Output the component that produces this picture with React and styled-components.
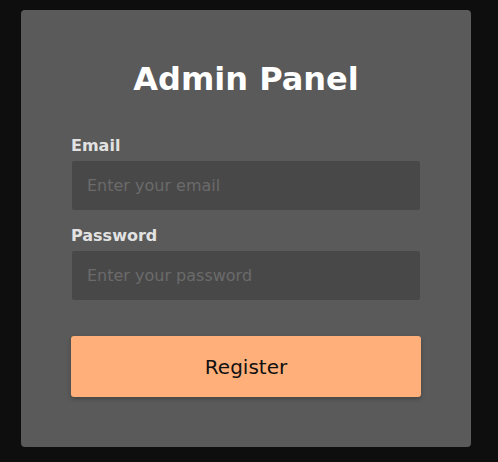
import styled, { createGlobalStyle } from 'styled-components';

const GlobalStyle = createGlobalStyle`
  html, body {
    margin: 0;
    padding: 0;
    background: #0e0e0e;
    font-family: "DejaVu Sans", sans-serif;
  }
`;

function App() {
  return (
    <>
      <GlobalStyle />
      <Page>
        <Card>
          <Title>Admin Panel</Title>
          <Field>
            <Label htmlFor="email">Email</Label>
            <Input id="email" type="email" placeholder="Enter your email" />
          </Field>
          <Field>
            <Label htmlFor="password">Password</Label>
            <Input id="password" type="password" placeholder="Enter your password" />
          </Field>
          <Button type="button">Register</Button>
        </Card>
      </Page>
    </>
  );
}

const Page = styled.div`
  min-height: 462px;
  padding: 10px 0 0 21px;
  box-sizing: border-box;
`;

const Card = styled.div`
  width: 450px;
  height: 437px;
  box-sizing: border-box;
  padding: 50px;
  background: #5a5a5a;
  border-radius: 4px;
  display: flex;
  flex-direction: column;
`;

const Title = styled.h1`
  margin: 0 0 38px;
  font-size: 32px;
  font-weight: bold;
  color: #ffffff;
  text-align: center;
`;

const Field = styled.div`
  display: flex;
  flex-direction: column;
  margin-bottom: 16px;
`;

const Label = styled.label`
  font-size: 16px;
  font-weight: bold;
  color: #e2e2e2;
  margin-bottom: 6px;
`;

const Input = styled.input`
  height: 49px;
  margin: 0 1px;
  box-sizing: border-box;
  padding: 0 15px;
  border: none;
  border-radius: 2px;
  background: #484848;
  color: #eeeeee;
  font-family: "DejaVu Sans", sans-serif;
  font-size: 16px;
  outline: none;

  &::placeholder {
    color: #6b6b6b;
  }
`;

const Button = styled.button`
  margin-top: 20px;
  height: 62px;
  border: none;
  border-radius: 3px;
  background: #ffb07a;
  color: #111111;
  font-family: "DejaVu Sans", sans-serif;
  font-size: 20px;
  box-shadow: 0 2px 4px rgba(0, 0, 0, 0.25);
  cursor: pointer;
`;

export default App;
